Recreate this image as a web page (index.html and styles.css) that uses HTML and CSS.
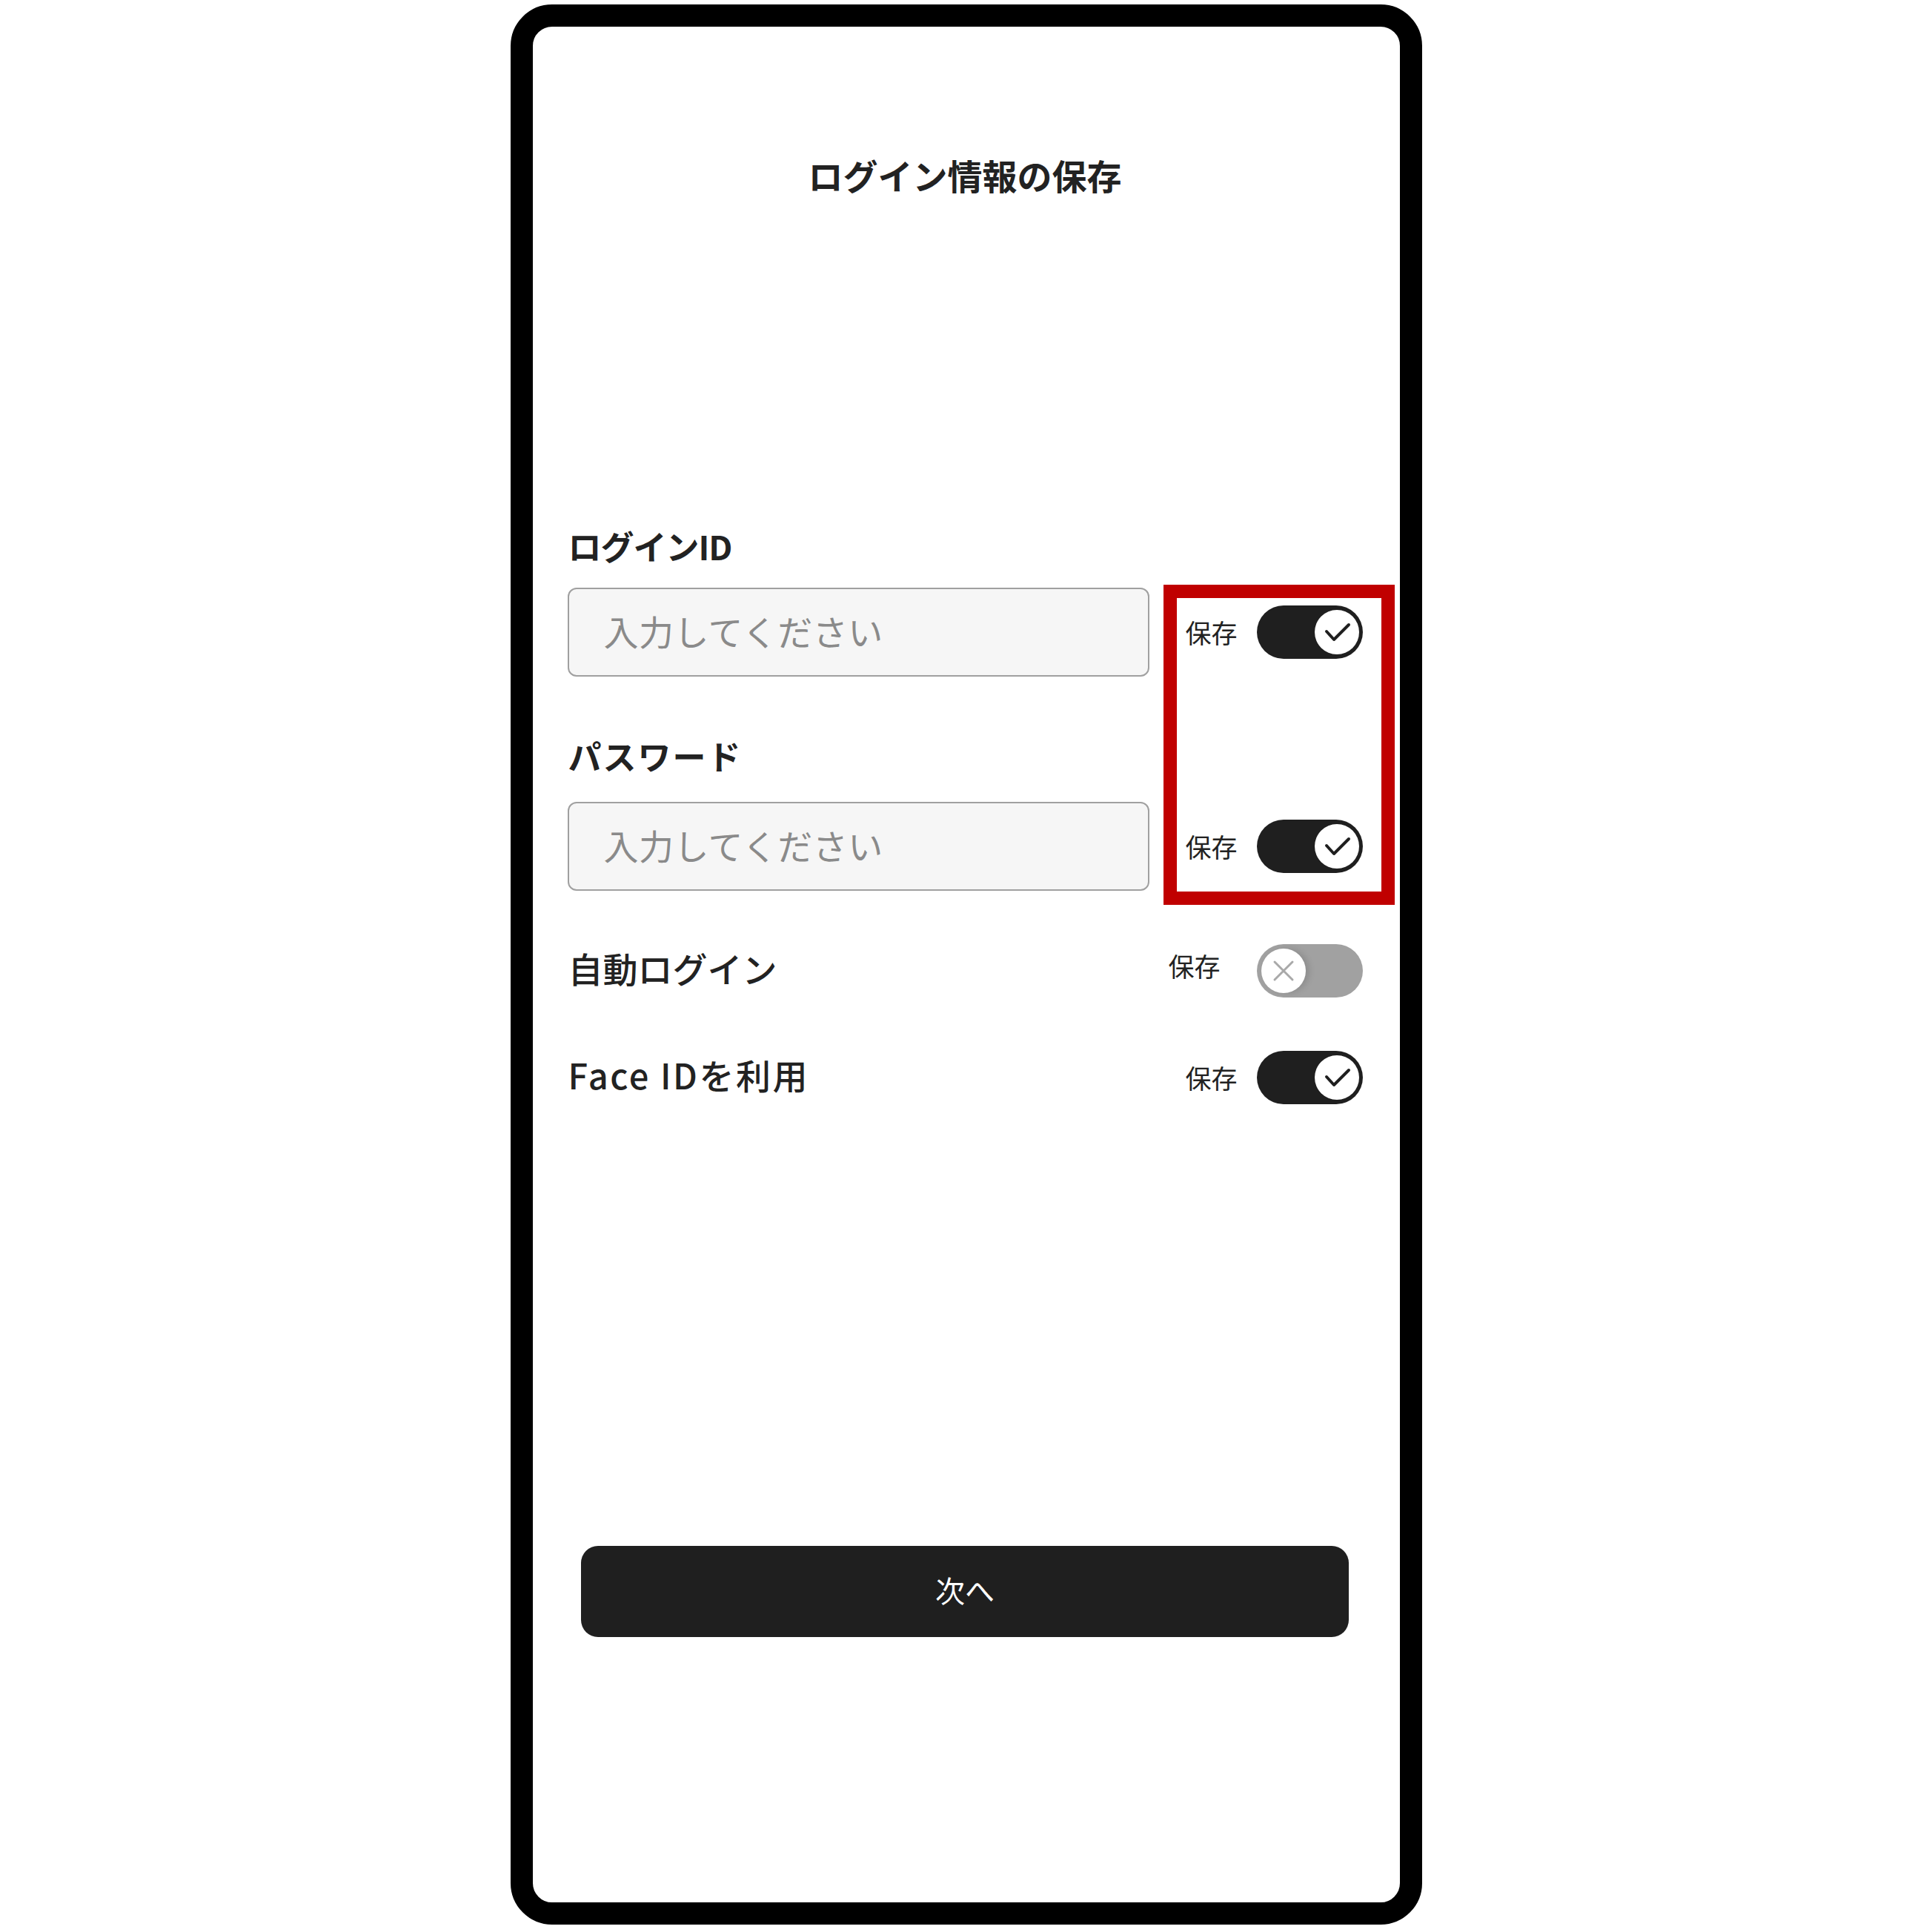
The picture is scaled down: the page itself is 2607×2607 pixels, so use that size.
FILE: index.html
```html
<!DOCTYPE html>
<html lang="ja">
<head>
<meta charset="utf-8">
<title>ログイン情報の保存</title>
<link rel="stylesheet" href="styles.css">
</head>
<body>
<div class="phone">
  <h1 class="title">ログイン情報の保存</h1>

  <div class="field field-id">
    <div class="field-label">ログインID</div>
    <div class="field-row">
      <div class="input">入力してください</div>
      <div class="save">
        <span class="save-label">保存</span>
        <span class="toggle on"><span class="knob"><svg viewBox="0 0 60 60"><polyline points="16,29 26,40 46,20" fill="none" stroke="#1f1f1f" stroke-width="4" stroke-linecap="round" stroke-linejoin="round"/></svg></span></span>
      </div>
    </div>
  </div>

  <div class="field field-pw">
    <div class="field-label">パスワード</div>
    <div class="field-row">
      <div class="input">入力してください</div>
      <div class="save">
        <span class="save-label">保存</span>
        <span class="toggle on"><span class="knob"><svg viewBox="0 0 60 60"><polyline points="16,29 26,40 46,20" fill="none" stroke="#1f1f1f" stroke-width="4" stroke-linecap="round" stroke-linejoin="round"/></svg></span></span>
      </div>
    </div>
  </div>

  <div class="option-row option-auto">
    <span class="option-label">自動ログイン</span>
    <div class="save">
      <span class="save-label save-label-shift">保存</span>
      <span class="toggle off"><span class="knob"><svg viewBox="0 0 60 60"><path d="M18 18 L42 42 M42 18 L18 42" fill="none" stroke="#a9a9a9" stroke-width="3" stroke-linecap="round"/></svg></span></span>
    </div>
  </div>

  <div class="option-row option-face">
    <span class="option-label">Face IDを利用</span>
    <div class="save">
      <span class="save-label">保存</span>
      <span class="toggle on"><span class="knob"><svg viewBox="0 0 60 60"><polyline points="16,29 26,40 46,20" fill="none" stroke="#1f1f1f" stroke-width="4" stroke-linecap="round" stroke-linejoin="round"/></svg></span></span>
    </div>
  </div>

  <button class="next" type="button">次へ</button>

  <div class="highlight"></div>
</div>
</body>
</html>
```

FILE: styles.css
```css
html, body {
  margin: 0;
  padding: 0;
  background: #ffffff;
}

body {
  font-family: "Noto Sans CJK JP", "Noto Sans", sans-serif;
  color: #1f1f1f;
}

.phone {
  position: relative;
  box-sizing: border-box;
  width: 1230px;
  height: 2591px;
  margin: 6px auto 0;
  border: 30px solid #000000;
  border-radius: 56px;
  background: #ffffff;
  padding: 170px 50px 0 47px;
}

.title {
  margin: 0;
  font-size: 47px;
  line-height: 60px;
  font-weight: 700;
  text-align: center;
  color: #222222;
}

.field-id {
  margin-top: 446px;
}

.field-pw {
  margin-top: 82px;
}

.field-label {
  font-size: 45px;
  line-height: 50px;
  font-weight: 700;
  color: #222222;
  padding-left: 1px;
}

.field-id .field-label {
  letter-spacing: -1px;
}

.field-pw .field-label {
  letter-spacing: 2px;
}

.field-row {
  margin-top: 31px;
  display: flex;
  align-items: center;
  justify-content: space-between;
}

.field-pw .field-row {
  margin-top: 37px;
}

.input {
  box-sizing: border-box;
  width: 785px;
  height: 120px;
  border: 2px solid #a0a0a0;
  border-radius: 12px;
  background: #f6f6f6;
  padding: 0 0 6px 47px;
  display: flex;
  align-items: center;
  font-size: 47px;
  font-weight: 400;
  color: #8a8a8a;
  letter-spacing: 0.5px;
}

.save {
  display: flex;
  align-items: center;
  gap: 26px;
}

.save-label {
  font-size: 35px;
  line-height: 44px;
  color: #222222;
}

.save-label-shift {
  margin-right: 23px;
  margin-bottom: 14px;
}

.toggle {
  box-sizing: border-box;
  width: 143px;
  height: 72px;
  border-radius: 36px;
  display: flex;
  align-items: center;
}

.toggle.on {
  background: #1f1f1f;
  justify-content: flex-end;
  padding-right: 5px;
}

.toggle.off {
  background: #a1a1a1;
  justify-content: flex-start;
  padding-left: 6px;
}

.knob {
  width: 60px;
  height: 60px;
  border-radius: 50%;
  background: #ffffff;
  display: block;
}

.toggle.off .knob {
  box-shadow: 5px 0 8px rgba(0, 0, 0, 0.12);
}

.knob svg {
  display: block;
  width: 60px;
  height: 60px;
}

.option-row {
  display: flex;
  align-items: center;
  justify-content: space-between;
  height: 72px;
}

.option-auto {
  margin-top: 72px;
}

.option-face {
  margin-top: 72px;
}

.option-label {
  font-size: 47px;
  line-height: 60px;
  font-weight: 500;
  color: #222222;
  padding-left: 1px;
  margin-bottom: 8px;
}

.option-face .option-label {
  letter-spacing: 2.5px;
}

.next {
  display: block;
  box-sizing: border-box;
  width: 1036px;
  height: 123px;
  margin: 596px auto 0;
  border: none;
  border-radius: 23px;
  background: #1f1f1f;
  color: #ffffff;
  font-family: "Noto Sans CJK JP", "Noto Sans", sans-serif;
  font-size: 40px;
  font-weight: 400;
  padding: 0 0 6px 0;
}

.highlight {
  position: absolute;
  left: 851px;
  top: 753px;
  width: 312px;
  height: 432px;
  box-sizing: border-box;
  border: 18px solid #c00000;
  pointer-events: none;
}
```
